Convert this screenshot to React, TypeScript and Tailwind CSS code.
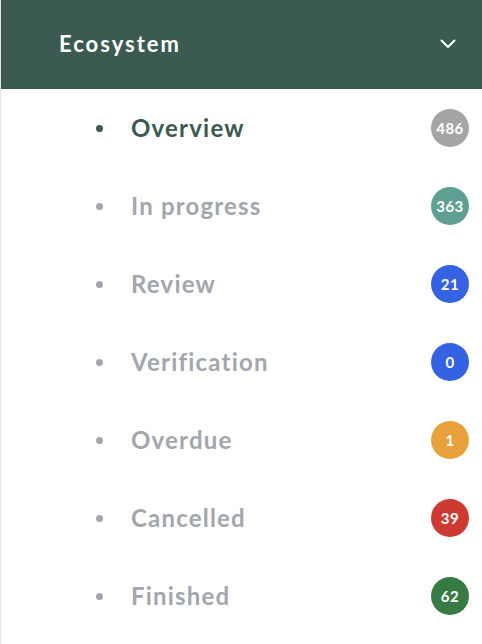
import React from "react";

const items = [
  { label: "Overview", count: "486", color: "bg-[#a5a5a5]", active: true },
  { label: "In progress", count: "363", color: "bg-[#5e9f94]" },
  { label: "Review", count: "21", color: "bg-[#3562e2]" },
  { label: "Verification", count: "0", color: "bg-[#3562e2]" },
  { label: "Overdue", count: "1", color: "bg-[#e9a23b]" },
  { label: "Cancelled", count: "39", color: "bg-[#cc3a31]" },
  { label: "Finished", count: "62", color: "bg-[#387a44]" },
];

export default function App() {
  return (
    <div
      className="w-[482px] h-[644px] bg-white border-l border-[#e6e6e6] overflow-hidden"
      style={{ fontFamily: "Lato, 'Open Sans', sans-serif" }}
    >
      <div className="h-[89px] bg-[#3a5a52] flex items-center pl-[58px] pr-[26px] pb-[2px] justify-between">
        <span className="text-white text-[22px] font-bold tracking-[2px]">Ecosystem</span>
        <svg width="16" height="10" viewBox="0 0 16 10" fill="none">
          <path d="M1.5 1.5 L8 8 L14.5 1.5" stroke="white" strokeWidth="2" strokeLinecap="round" strokeLinejoin="round" />
        </svg>
      </div>
      <div className="flex flex-col">
        {items.map((it) => (
          <div key={it.label} className="h-[78px] flex items-center pl-[95px] pr-[13px]">
            <span
              className={`w-[7px] h-[7px] rounded-full ${it.active ? "bg-[#3a5a52]" : "bg-[#a2a6ae]"}`}
            />
            <span
              className={`ml-[28px] text-[24px] font-bold tracking-[1.2px] ${it.active ? "text-[#3a5a52]" : "text-[#a2a6ae]"}`}
            >
              {it.label}
            </span>
            <span
              className={`ml-auto w-[38px] h-[38px] rounded-full ${it.color} text-white text-[15px] font-bold tracking-[0.5px] flex items-center justify-center`}
            >
              {it.count}
            </span>
          </div>
        ))}
      </div>
    </div>
  );
}
